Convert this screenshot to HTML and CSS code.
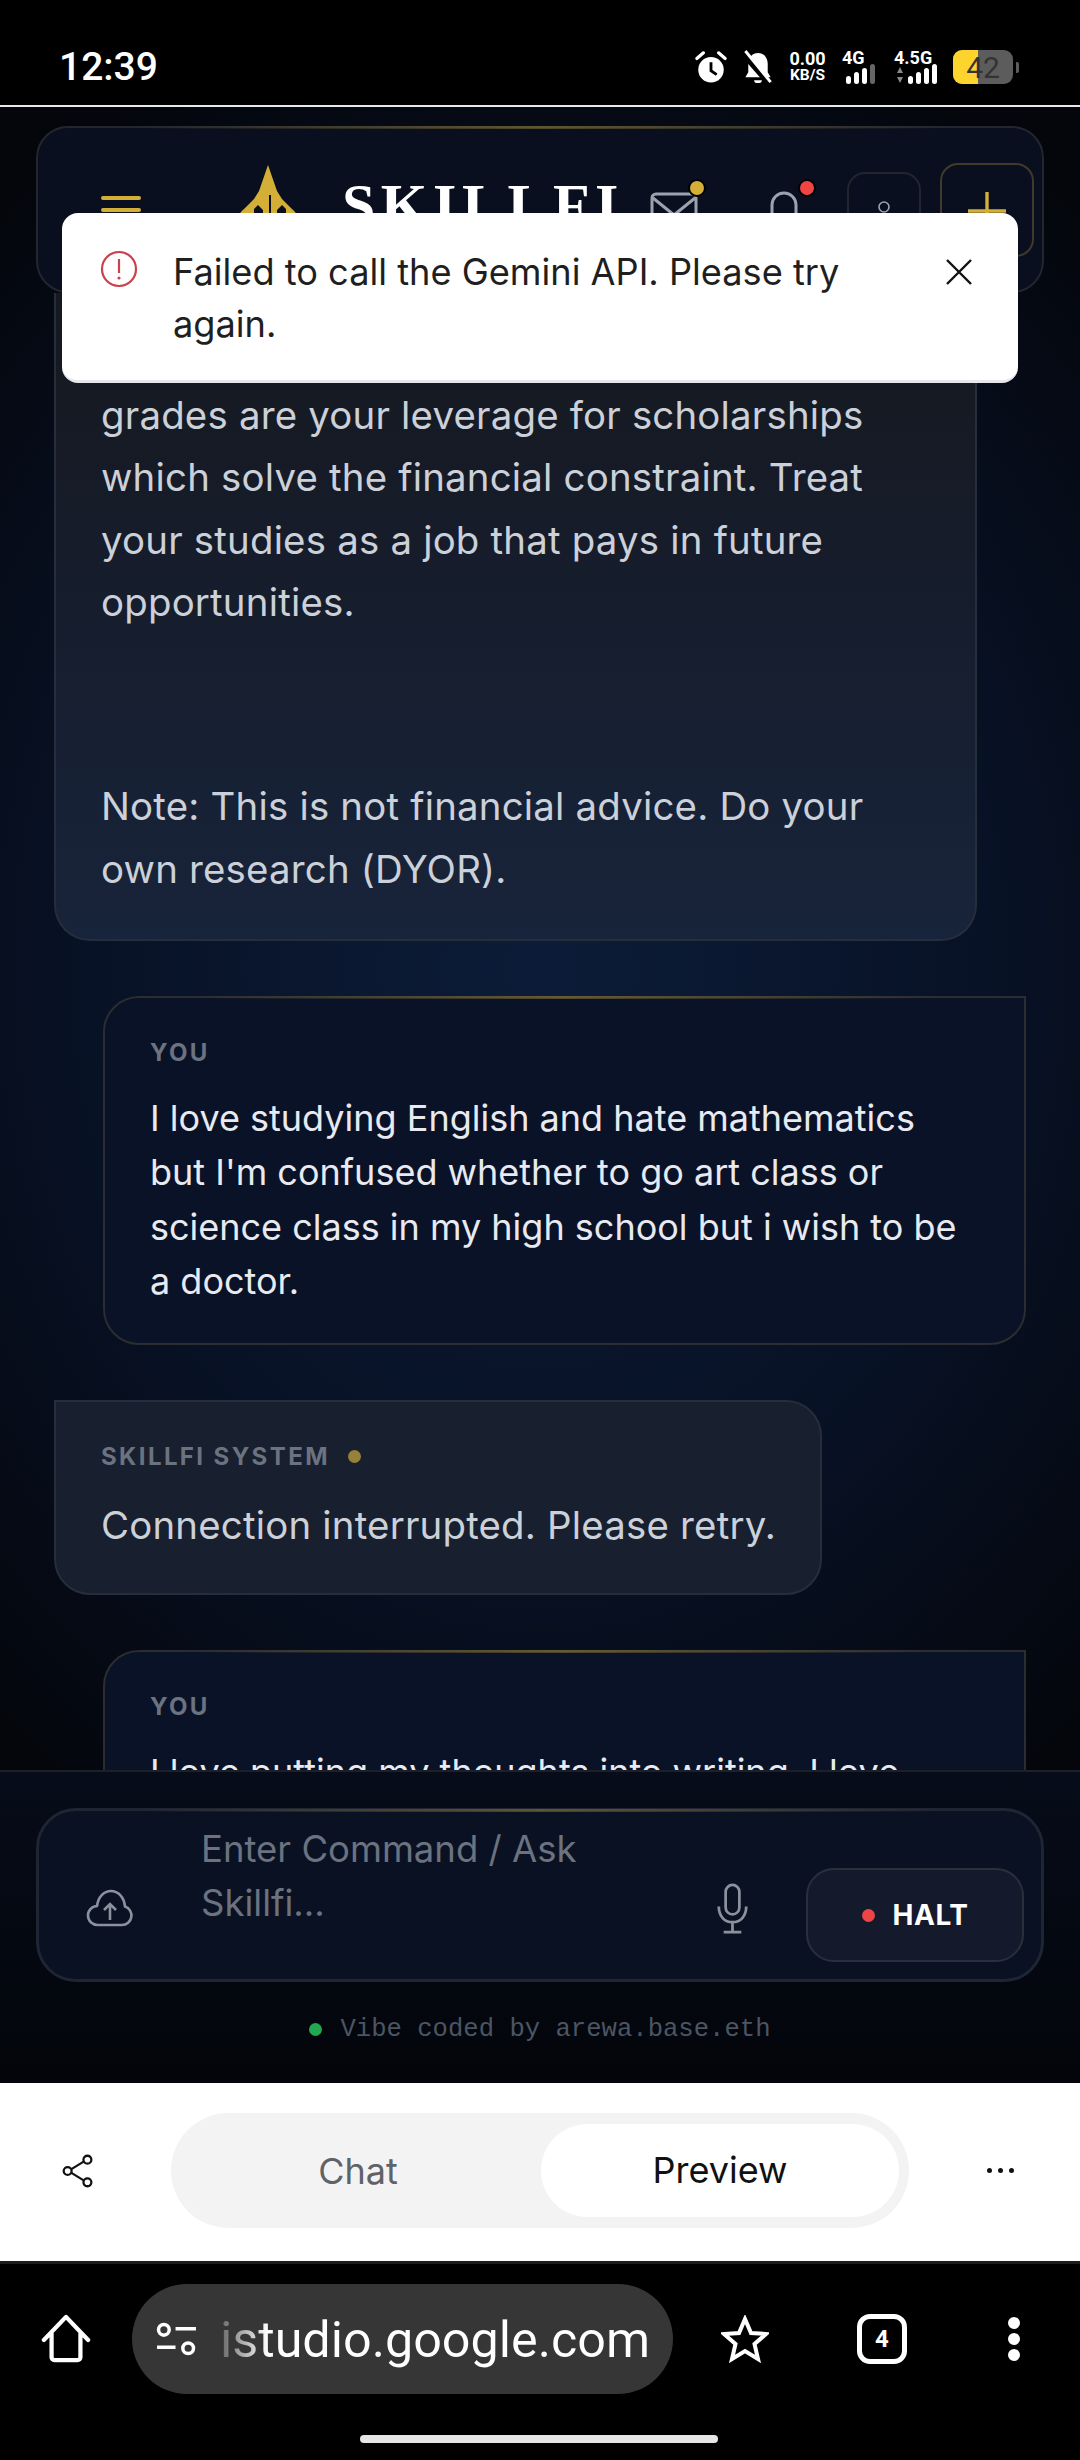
FILE: index.html
```html
<!DOCTYPE html>
<html lang="en">
<head>
    <meta charset="UTF-8">
    <meta name="viewport" content="width=device-width, initial-scale=1.0">
    <title>Skillfi</title>
    <link rel="stylesheet" href="styles.css">
</head>
<body>
    <div class="phone">
        <!-- android status bar -->
        <div class="status-bar">
            <span class="clock">12:39</span>
            <div class="status-icons">
                <svg class="ic-alarm" viewBox="0 0 36 36"><circle cx="18" cy="21" r="13.500" fill="#fff"/><path d="M18 13v9l6 4" fill="none" stroke="#000" stroke-width="3"/><path d="M3 9l7-6M33 9l-7-6" stroke="#fff" stroke-width="3.400" stroke-linecap="round"/></svg>
                <svg class="ic-mute" viewBox="0 0 30 36"><path d="M15 3c6 0 10 5 10 11v9l3 5H2l3-5v-9c0-6 4-11 10-11z" fill="#fff"/><path d="M11 31a4 3 0 0 0 8 0z" fill="#fff"/><path d="M-1 3l27 31" stroke="#000" stroke-width="6"/><path d="M2 1l26 32" stroke="#fff" stroke-width="3"/></svg>
                <div class="net-speed"><span>0.00</span><span>KB/S</span></div>
                <div class="signal">
                    <span class="signal-label">4G</span>
                    <div class="bars"><i class="b1"></i><i class="b2"></i><i class="b3"></i><i class="b4 off"></i></div>
                </div>
                <div class="signal signal-wide">
                    <span class="signal-label">4.5G</span>
                    <div class="bars"><svg class="arrows" viewBox="0 0 6 18"><path d="M3 1l3 6H0zM3 17l3-6H0z" fill="#888"/></svg><i class="b1"></i><i class="b2"></i><i class="b3"></i><i class="b4"></i></div>
                </div>
                <div class="battery"><div class="battery-body"><div class="battery-fill"></div><span>42</span></div><div class="battery-tip"></div></div>
            </div>
        </div>

        <div class="app">
            <div class="chat-scroll">
                <header class="top-card">
                    <svg class="ic-menu" viewBox="0 0 40 30"><path d="M2 3h36M2 15h36M2 27h36" stroke="#d4af37" stroke-width="4" stroke-linecap="round"/></svg>
                    <div class="brand">
                        <svg class="logo" viewBox="0 0 60 80"><path fill="#d4af37" d="M30 0l9 26 5 8 10 10c4 3 6 7 5 12H48V44l-4-4-5 5v35h-6V30h-2v50h-6V45l-5-5-4 4v12H1c-1-5 1-9 5-12l10-10 5-8z"/></svg>
                        <span class="brand-name">SKILLFI</span>
                    </div>
                    <div class="top-actions">
                        <div class="action-icon">
                            <svg viewBox="0 0 48 40"><rect x="2" y="2" width="44" height="36" rx="4" fill="none" stroke="#9ca3af" stroke-width="3"/><path d="M3 6l21 17L45 6" fill="none" stroke="#9ca3af" stroke-width="3"/></svg>
                            <span class="dot dot-gold"></span>
                        </div>
                        <div class="action-icon action-bell">
                            <svg viewBox="0 0 34 44"><path d="M5 32V17a12 12 0 0 1 24 0v15l4 5H1z" fill="none" stroke="#9ca3af" stroke-width="3"/></svg>
                            <span class="dot dot-red"></span>
                        </div>
                        <div class="square-btn">
                            <svg viewBox="0 0 24 32"><circle cx="12" cy="9" r="5" fill="none" stroke="#9ca3af" stroke-width="1.600"/></svg>
                        </div>
                        <div class="square-btn square-gold">
                            <svg viewBox="0 0 38 38"><path d="M19 0v38M0 19h38" stroke="#d4af37" stroke-width="3.400"/></svg>
                        </div>
                    </div>
                </header>

                <div class="message bot-message first-message">
                    <p>grades are your leverage for scholarships which solve the financial constraint. Treat your studies as a job that pays in future opportunities.</p>
                    <p class="note">Note: This is not financial advice. Do your own research (DYOR).</p>
                </div>

                <div class="message user-message">
                    <div class="sender">YOU</div>
                    <p>I love studying English and hate mathematics but I'm confused whether to go art class or science class in my high school but i wish to be a doctor.</p>
                </div>

                <div class="message bot-message short-message">
                    <div class="sender">SKILLFI SYSTEM <span class="sender-dot"></span></div>
                    <p>Connection interrupted. Please retry.</p>
                </div>

                <div class="message user-message">
                    <div class="sender">YOU</div>
                    <p>I love putting my thoughts into writing. I love</p>
                </div>
            </div>

            <div class="composer-area">
                <div class="composer">
                    <svg class="ic-upload" viewBox="0 0 48 38"><path d="M12 36h24a9.500 9.500 0 0 0 3-18.500C38 8 32 2 25 2S12 8 11 17a9.500 9.500 0 0 0 1 19z" fill="none" stroke="#8b919d" stroke-width="2.600" stroke-linejoin="round"/><path d="M24 31V15M18 21l6-6 6 6" fill="none" stroke="#8b919d" stroke-width="2.600"/></svg>
                    <div class="composer-input">Enter Command / Ask Skillfi...</div>
                    <svg class="ic-mic" viewBox="0 0 32 52"><rect x="9" y="2" width="14" height="30" rx="7" fill="none" stroke="#8b919d" stroke-width="2.800"/><path d="M2 24c0 10 6 16 14 16s14-6 14-16M16 40v9M7 50h18" fill="none" stroke="#8b919d" stroke-width="2.800"/></svg>
                    <div class="halt-btn"><span class="halt-dot"></span>HALT</div>
                </div>
                <div class="credit"><span class="credit-dot"></span>Vibe coded by arewa.base.eth</div>
            </div>

            <!-- error toast -->
            <div class="toast">
                <svg class="ic-alert" viewBox="0 0 38 38"><circle cx="19" cy="19" r="17" fill="none" stroke="#c9424f" stroke-width="2.200"/><path d="M19 9v14" stroke="#c9424f" stroke-width="2.200"/><circle cx="19" cy="28" r="1.600" fill="#c9424f"/></svg>
                <div class="toast-text">Failed to call the Gemini API. Please try again.</div>
                <svg class="ic-close" viewBox="0 0 26 26"><path d="M1 1l24 24M25 1L1 25" stroke="#111" stroke-width="2.400"/></svg>
            </div>
        </div>

        <!-- ai studio bar -->
        <div class="studio-bar">
            <svg class="ic-share" viewBox="0 0 34 36"><circle cx="27" cy="6" r="4.200" fill="none" stroke="#111" stroke-width="2.400"/><circle cx="6" cy="18" r="4.200" fill="none" stroke="#111" stroke-width="2.400"/><circle cx="27" cy="30" r="4.200" fill="none" stroke="#111" stroke-width="2.400"/><path d="M10 16L23 8M10 20l13 8" stroke="#111" stroke-width="2.400"/></svg>
            <div class="tabs">
                <div class="tab">Chat</div>
                <div class="tab tab-active">Preview</div>
            </div>
            <div class="more-dots"><i></i><i></i><i></i></div>
        </div>

        <!-- browser bar -->
        <div class="browser-bar">
            <svg class="ic-home" viewBox="0 0 52 52"><path d="M3 27L26 3l23 24M11 20v25a3 3 0 0 0 3 3h24a3 3 0 0 0 3-3V20" fill="none" stroke="#fff" stroke-width="4.400" stroke-linecap="round" stroke-linejoin="round"/></svg>
            <div class="url-pill">
                <svg class="ic-tune" viewBox="0 0 42 36"><circle cx="8" cy="8" r="5.500" fill="none" stroke="#fff" stroke-width="3.600"/><path d="M20 7h21M1 26h19" stroke="#fff" stroke-width="3.600"/><circle cx="33" cy="27" r="5.500" fill="none" stroke="#fff" stroke-width="3.600"/></svg>
                <span class="url-text">istudio.google.com</span>
            </div>
            <svg class="ic-star" viewBox="0 0 48 48"><path d="M24 4l6 14 15 1-11.500 10 3.500 15-13-8-13 8 3.500-15L3 19l15-1z" fill="none" stroke="#fff" stroke-width="4"/></svg>
            <div class="tab-count">4</div>
            <div class="kebab"><i></i><i></i><i></i></div>
        </div>
        <div class="gesture-area"><div class="home-pill"></div></div>
    </div>
</body>
</html>
```

FILE: styles.css
```css
* {
    box-sizing: border-box;
}

body {
    margin: 0;
    background-color: #000;
    font-family: Inter, 'Noto Sans', sans-serif;
    color: #fff;
}

p {
    margin: 0;
}

.phone {
    width: 1080px;
    height: 2460px;
    display: flex;
    flex-direction: column;
    overflow: hidden;
}

/* status bar */
.status-bar {
    height: 107px;
    flex: none;
    background-color: #000;
    border-bottom: 2px solid #e8e8e8;
    display: flex;
    align-items: center;
    justify-content: space-between;
    padding: 29px 61px 0 59px;
}

.clock {
    font-family: Roboto, sans-serif;
    font-size: 39px;
    font-weight: 500;
}

.status-icons {
    display: flex;
    align-items: center;
}

.ic-alarm {
    width: 34px;
    height: 34px;
}

.ic-mute {
    width: 30px;
    height: 35px;
    margin-left: 15px;
}

.net-speed {
    display: flex;
    flex-direction: column;
    align-items: center;
    width: 39px;
    margin-left: 15px;
    font-family: Roboto, sans-serif;
    font-weight: 700;
    font-size: 18px;
    line-height: 17px;
}

.net-speed span:last-child {
    font-size: 15.500px;
}

.signal {
    width: 33px;
    margin-left: 15px;
    font-family: Roboto, sans-serif;
    font-weight: 700;
}

.signal-wide {
    width: 43px;
    margin-left: 19px;
}

.signal-label {
    display: block;
    font-size: 18px;
    line-height: 15px;
}

.bars {
    display: flex;
    align-items: flex-end;
    justify-content: flex-end;
    gap: 3px;
    height: 20px;
    margin-top: -1px;
}

.bars i {
    width: 5px;
    background-color: #fff;
    border-radius: 2.500px;
}

.arrows {
    width: 6px;
    height: 18px;
    margin-right: 2px;
}

.b1 { height: 8px; }
.b2 { height: 12px; }
.b3 { height: 16px; }
.b4 { height: 20px; }

.bars .off {
    background-color: #666;
}

.battery {
    display: flex;
    align-items: center;
    gap: 3px;
    margin-left: 16px;
}

.battery-body {
    position: relative;
    width: 60px;
    height: 34px;
    border-radius: 9px;
    background-color: #5c5c5c;
    overflow: hidden;
    text-align: center;
    font-family: Roboto, sans-serif;
    font-size: 30px;
    line-height: 35px;
    color: #333;
}

.battery-fill {
    position: absolute;
    left: 0;
    top: 0;
    bottom: 0;
    width: 25px;
    background-color: #fdd42e;
}

.battery-body span {
    position: relative;
}

.battery-tip {
    width: 3px;
    height: 11px;
    background-color: #5c5c5c;
    border-radius: 0 2px 2px 0;
}

/* app */
.app {
    position: relative;
    height: 1976px;
    flex: none;
    overflow: hidden;
    display: flex;
    flex-direction: column;
    background: radial-gradient(ellipse 820px 1000px at 50% 860px, #0c1c38 0%, #081226 55%, #04060c 100%);
}

.chat-scroll {
    height: 1663px;
    flex: none;
    overflow: hidden;
    padding: 19px 36px 0;
}

.top-card {
    height: 167px;
    border: 2px solid #23262e;
    border-radius: 32px;
    background-color: #090f1e;
    display: flex;
    align-items: flex-start;
    padding: 35px 8px 0 63px;
    position: relative;
}

.top-card::before,
.user-message::before,
.composer::before {
    content: '';
    position: absolute;
    left: 10%;
    right: 10%;
    top: -2px;
    height: 3px;
    background: linear-gradient(90deg, rgba(212, 175, 55, 0), rgba(212, 175, 55, 0.35), rgba(212, 175, 55, 0));
}

.ic-menu {
    width: 40px;
    height: 30px;
    margin-top: 32px;
    flex: none;
}

.brand {
    display: flex;
    align-items: flex-start;
    margin-left: 97px;
    margin-top: 2px;
    gap: 44px;
}

.logo {
    width: 60px;
    height: 80px;
}

.brand-name {
    font-family: 'Liberation Serif', serif;
    font-size: 60px;
    letter-spacing: 5.500px;
    line-height: 80px;
    font-weight: 700;
}

.top-actions {
    display: flex;
    align-items: flex-start;
    margin-left: auto;
}

.action-icon {
    position: relative;
    width: 48px;
    margin-top: 29px;
    margin-right: 69px;
}

.action-icon svg {
    display: block;
    width: 48px;
    height: 40px;
}

.action-bell {
    width: 34px;
    margin-top: 25px;
    margin-right: 46px;
}

.action-bell svg {
    width: 34px;
    height: 44px;
}

.dot {
    position: absolute;
    width: 18px;
    height: 18px;
    border-radius: 50%;
    border: 2px solid #000;
    top: -13px;
    right: -8px;
}

.dot-gold {
    background-color: #d4af37;
}

.dot-red {
    background-color: #ef4444;
    top: -9px;
    right: -15px;
}

.square-btn {
    width: 74px;
    height: 74px;
    border: 2px solid #21252f;
    border-radius: 18px;
    margin-top: 9px;
    margin-right: 19px;
    display: flex;
    justify-content: center;
    padding-top: 24px;
}

.square-btn svg {
    width: 24px;
    height: 32px;
}

.square-gold {
    width: 94px;
    height: 94px;
    margin-top: 0;
    margin-right: 0;
    border-color: #3f3a2a;
    padding-top: 27px;
}

.square-gold svg {
    width: 38px;
    height: 38px;
}

/* messages */
.message {
    position: relative;
}

.bot-message {
    background-color: #181f2e;
    border: 2px solid #262e3b;
    border-radius: 0 36px 36px 36px;
    color: #cbd0d9;
    font-size: 38.400px;
    letter-spacing: 0.200px;
    line-height: 62.400px;
    margin-left: 18px;
    padding-left: 45px;
    padding-right: 46px;
}

.first-message {
    width: 923px;
    padding-top: 91px;
    padding-bottom: 39px;
    border-top: none;
    border-radius: 0 0 36px 36px;
    background: linear-gradient(180deg, #15191f 0%, #161d2d 50%, #18243b 100%);
}

.note {
    margin-top: 141.600px;
}

.user-message {
    width: 923px;
    margin: 55px 0 0 67px;
    padding: 40px 46px 34px 45px;
    background-color: #0a1228;
    border: 2px solid #2c2d31;
    border-radius: 36px 0 36px 36px;
    color: #e8eaf0;
    font-size: 36px;
    line-height: 54.400px;
}

.short-message {
    width: 768px;
    margin-top: 55px;
    padding-top: 40px;
    padding-bottom: 37px;
    padding-right: 30px;
}

.sender {
    display: flex;
    align-items: center;
    font-size: 24px;
    font-weight: 700;
    letter-spacing: 2.400px;
    line-height: 30px;
    color: #6b7280;
    margin-bottom: 23px;
}

.short-message .sender {
    margin-bottom: 22px;
}

.sender-dot {
    width: 13px;
    height: 13px;
    border-radius: 50%;
    background-color: #96803a;
    margin-left: 18px;
}

/* composer */
.composer-area {
    flex: 1;
    position: relative;
    border-top: 2px solid #1b2029;
    background: linear-gradient(180deg, #060c19 0%, #03050a 100%);
    padding: 36px 36px 0;
}

.composer {
    position: relative;
    height: 174px;
    border: 3px solid #1f2532;
    border-radius: 40px;
    background-color: #0a1122;
    display: flex;
    align-items: flex-start;
    padding: 0 0 0 47px;
}

.ic-upload {
    width: 48px;
    height: 38px;
    margin-top: 78px;
    flex: none;
}

.composer-input {
    width: 440px;
    margin-left: 67px;
    margin-top: 11px;
    font-size: 36.500px;
    line-height: 54.400px;
    color: #6b7280;
}

.ic-mic {
    width: 33px;
    height: 51px;
    margin-left: 75px;
    margin-top: 72px;
    flex: none;
}

.halt-btn {
    width: 218px;
    height: 94px;
    margin: 57px 0 0 57px;
    border: 2px solid #2a2f3c;
    border-radius: 28px;
    background-color: #141a2b;
    display: flex;
    align-items: center;
    justify-content: center;
    font-size: 28px;
    font-weight: 700;
    letter-spacing: 0.500px;
}

.halt-dot {
    width: 13px;
    height: 13px;
    border-radius: 50%;
    background-color: #ef4444;
    margin-right: 18px;
}

.credit {
    display: flex;
    align-items: center;
    justify-content: center;
    margin-top: 33px;
    font-family: 'Liberation Mono', monospace;
    font-size: 25.600px;
    color: #4b5563;
}

.credit-dot {
    width: 13px;
    height: 13px;
    border-radius: 50%;
    background-color: #22a84f;
    margin-right: 18px;
}

/* toast */
.toast {
    position: absolute;
    left: 62px;
    top: 106px;
    width: 956px;
    height: 170px;
    background-color: #fff;
    border-radius: 16px;
    border-bottom: 3px solid #e5e7eb;
    display: flex;
    align-items: flex-start;
    padding: 33px 46px 0 38px;
    color: #1f1f1f;
}

.ic-alert {
    width: 38px;
    height: 38px;
    margin-top: 4px;
    flex: none;
}

.toast-text {
    width: 700px;
    margin-left: 35px;
    font-size: 36.200px;
    line-height: 52px;
}

.ic-close {
    width: 26px;
    height: 26px;
    margin-left: auto;
    margin-top: 13px;
}

/* studio bar */
.studio-bar {
    height: 181px;
    flex: none;
    background-color: #fff;
    display: flex;
    align-items: center;
    padding: 0 66px 3px 62px;
    border-bottom: 3px solid #1c1c1c;
}

.ic-share {
    width: 32px;
    height: 36px;
    flex: none;
}

.tabs {
    width: 738px;
    height: 115px;
    margin-left: 77px;
    background-color: #f3f3f3;
    border-radius: 58px;
    display: flex;
    align-items: center;
    padding: 0 10px 0 4px;
    color: #5f6368;
    font-size: 36px;
}

.tab {
    flex: 1;
    text-align: center;
}

.tab-active {
    width: 358px;
    flex: none;
    height: 93px;
    line-height: 93px;
    background-color: #fff;
    border-radius: 47px;
    color: #111;
}

.more-dots {
    display: flex;
    gap: 6px;
    margin-left: auto;
}

.more-dots i {
    width: 5px;
    height: 5px;
    border-radius: 50%;
    background-color: #111;
}

/* browser bar */
.browser-bar {
    height: 150px;
    flex: none;
    background-color: #000;
    display: flex;
    align-items: center;
    padding-left: 41px;
}

.ic-home {
    width: 50px;
    height: 50px;
    flex: none;
}

.url-pill {
    width: 541px;
    height: 110px;
    margin-left: 41px;
    background-color: #363636;
    border-radius: 55px;
    display: flex;
    align-items: center;
    padding-left: 24px;
    overflow: hidden;
}

.ic-tune {
    width: 41px;
    height: 35px;
    flex: none;
}

.url-text {
    margin-left: 23px;
    font-family: Roboto, sans-serif;
    font-size: 50.300px;
    white-space: nowrap;
    background: linear-gradient(90deg, #666 0, #fff 48px);
    -webkit-background-clip: text;
    background-clip: text;
    color: transparent;
}

.ic-star {
    width: 48px;
    height: 48px;
    margin-left: 48px;
    flex: none;
}

.tab-count {
    width: 50px;
    height: 50px;
    margin-left: 88px;
    border: 5px solid #fff;
    border-radius: 13px;
    display: flex;
    align-items: center;
    justify-content: center;
    font-family: Roboto, sans-serif;
    font-size: 24px;
    font-weight: 700;
}

.kebab {
    display: flex;
    flex-direction: column;
    gap: 4px;
    margin-left: 101px;
}

.kebab i {
    width: 12px;
    height: 12px;
    border-radius: 50%;
    background-color: #fff;
}

.gesture-area {
    flex: 1;
    background-color: #000;
    position: relative;
}

.home-pill {
    position: absolute;
    left: 360px;
    top: 21px;
    width: 358px;
    height: 8px;
    border-radius: 4px;
    background-color: #e6e6e6;
}
```
